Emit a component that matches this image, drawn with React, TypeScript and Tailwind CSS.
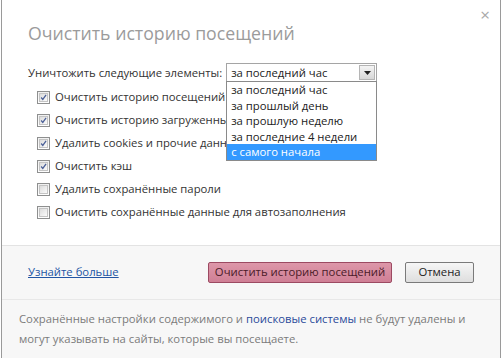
import React from "react";

const font = { fontFamily: '"Open Sans", "Noto Sans", sans-serif' };

function Check({ checked }: { checked: boolean }) {
  return (
    <span className="flex h-[13px] w-[13px] shrink-0 items-center justify-center border border-[#8e8f8f] bg-gradient-to-b from-[#f0f0f0] to-[#ffffff]">
      <span className="flex h-[9px] w-[9px] items-center justify-center border border-[#c4c4c4] bg-gradient-to-br from-[#dcdcdc] to-[#fbfbfb]">
        {checked && (
          <svg width="9" height="9" viewBox="0 0 9 9">
            <path d="M1.5 4.5 L3.6 7 L7.8 1.2" stroke="#4a5f97" strokeWidth="1.6" fill="none" />
          </svg>
        )}
      </span>
    </span>
  );
}

const rows: [string, boolean][] = [
  ["Очистить историю посещений", true],
  ["Очистить историю загруженных файлов", true],
  ["Удалить cookies и прочие данные сайтов", true],
  ["Очистить кэш", true],
  ["Удалить сохранённые пароли", false],
  ["Очистить сохранённые данные для автозаполнения", false],
];

const options = ["за последний час", "за прошлый день", "за прошлую неделю", "за последние 4 недели"];

export default function App() {
  return (
    <div className="h-[358px] w-[503px] overflow-hidden bg-white" style={font}>
      <div className="relative ml-[1px] flex h-[358px] w-[500px] flex-col border-x border-[#9a9a9a] text-[11.3px]">
        <span className="absolute right-[10px] top-[5px] text-[17px] leading-[20px] text-[#a8a8a8]">×</span>
        <div className="flex h-[246px] shrink-0 flex-col border-b border-[#e3e3e3] bg-white pl-[26px]">
          <div className="mt-[20px] whitespace-nowrap text-[17.7px] leading-[26px] text-[#9b9b9b]">Очистить историю посещений</div>
          <div className="mt-[17px] flex items-center gap-[4px] text-[#333]">
            <span className="whitespace-nowrap leading-[18px]">Уничтожить следующие элементы:</span>
            <div className="relative">
              <div className="flex h-[19px] w-[151px] items-center justify-between border border-[#a5a5a5] bg-white pl-[4px] pr-[1px]">
                <span className="whitespace-nowrap leading-[16px] text-[#222]">за последний час</span>
                <span className="flex h-[15px] w-[16px] items-center justify-center border border-[#b5b5b5] bg-gradient-to-b from-[#f4f4f4] to-[#d8d8d8]">
                  <svg width="7" height="4" viewBox="0 0 7 4"><path d="M0 0 H7 L3.5 4 Z" fill="#222" /></svg>
                </span>
              </div>
              <div className="absolute left-0 top-[18px] z-10 flex w-[151px] flex-col border border-[#8a8a8a] bg-white">
                {options.map((o) => (
                  <div key={o} className="h-[15.5px] whitespace-nowrap pl-[4px] leading-[15.5px] text-[#222]">{o}</div>
                ))}
                <div className="h-[15.5px] whitespace-nowrap bg-[#3399ff] pl-[4px] leading-[15.5px] text-white">с самого начала</div>
              </div>
            </div>
          </div>
          <div className="mt-[6px] flex flex-col gap-[5px] pl-[9px] text-[#333]">
            {rows.map(([t, c]) => (
              <div key={t} className="flex h-[18px] items-center gap-[5px]">
                <Check checked={c} />
                <span className="whitespace-nowrap leading-[18px]">{t}</span>
              </div>
            ))}
          </div>
        </div>
        <div className="flex h-[54px] shrink-0 items-center border-b border-[#e8e8e8] bg-[#f7f7f7] pl-[26px] pr-[26px]">
          <span className="whitespace-nowrap text-[#2255a4] underline">Узнайте больше</span>
          <div className="ml-auto flex gap-[13px]">
            <div className="flex h-[21px] w-[184px] items-center justify-center whitespace-nowrap rounded-[2px] border border-[#9c4a62] bg-gradient-to-b from-[#dd97a9] to-[#cf7f95] text-[#4a1a28]">
              Очистить историю посещений
            </div>
            <div className="flex h-[21px] w-[69px] items-center justify-center whitespace-nowrap rounded-[2px] border border-[#7a7a7a] bg-gradient-to-b from-[#f6f6f6] to-[#dedede] text-[#222]">
              Отмена
            </div>
          </div>
        </div>
        <div className="flex-1 whitespace-nowrap bg-[#f7f7f7] pl-[17px] pt-[9px] text-[11.3px] leading-[20px] text-[#7b7b7b]">
          Сохранённые настройки содержимого и <span className="text-[#2a4a9a]">поисковые системы</span> не будут удалены и
          <br />
          могут указывать на сайты, которые вы посещаете.
        </div>
      </div>
    </div>
  );
}
